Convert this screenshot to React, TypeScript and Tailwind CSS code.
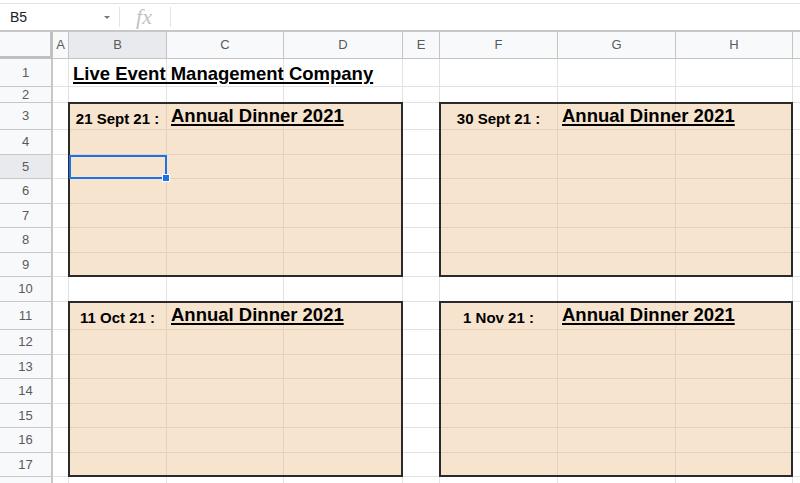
import React from "react";

const COLS = ["", "A", "B", "C", "D", "E", "F", "G", "H", ""];
const ROW_COUNT = 18;

const FONT = "font-['Liberation_Sans',Arial,sans-serif]";

function isOrange(r: number, c: number) {
  const inRows = (r >= 3 && r <= 9) || (r >= 11 && r <= 17);
  const inCols = (c >= 2 && c <= 4) || (c >= 6 && c <= 8);
  return inRows && inCols;
}

const dates: Record<string, string> = {
  "3-2": "21 Sept 21 :",
  "3-6": "30 Sept 21 :",
  "11-2": "11 Oct 21 :",
  "11-6": "1 Nov 21 :",
};

function HeaderCell({ c }: { c: number }) {
  if (c === 0) {
    return <div className="bg-[#f8f9fa] border-r-[3px] border-b-[3px] border-[#c0c0c0]" />;
  }
  const selected = c === 2;
  return (
    <div
      className={
        "flex items-center justify-center border-r border-b border-[#c4c4c4] text-[13px] text-[#5a5a5a] " +
        (selected ? "bg-[#e8eaed]" : "bg-[#f8f9fa]")
      }
    >
      {COLS[c]}
    </div>
  );
}

function RowHeader({ r }: { r: number }) {
  const selected = r === 5;
  return (
    <div
      className={
        "flex items-center justify-center border-r-2 border-b border-[#c8c8c8] text-[13px] text-[#5a5a5a] " +
        (selected ? "bg-[#e8eaed]" : "bg-[#f8f9fa]")
      }
    >
      {r <= 17 ? r : null}
    </div>
  );
}

function Cell({ r, c }: { r: number; c: number }) {
  const orange = isOrange(r, c);
  const base =
    "relative flex min-w-0 border-r border-b " +
    (orange ? "bg-[#f6e4cf] border-[#e3d2bf]" : "bg-white border-[#e2e2e2]");

  const key = `${r}-${c}`;
  let content: React.ReactNode = null;
  let align = "";

  if (r === 1 && c === 2) {
    align = " items-end";
    content = (
      <span className="relative z-10 whitespace-nowrap pl-[4px] pb-[3px] text-[18.5px] leading-none font-bold text-black underline decoration-2 underline-offset-[2px]">
        Live Event Management Company
      </span>
    );
  } else if (dates[key]) {
    align = " items-end justify-center";
    content = (
      <span
        className={
          "relative z-10 whitespace-nowrap text-[15px] leading-none font-bold text-black " +
          (r === 3 ? "pb-[3px]" : "pb-[4px]")
        }
      >
        {dates[key]}
      </span>
    );
  } else if ((r === 3 || r === 11) && (c === 3 || c === 7)) {
    align = " items-end";
    content = (
      <span
        className={
          "relative z-10 whitespace-nowrap pl-[4px] text-[18.5px] leading-none font-bold text-black underline decoration-2 underline-offset-[2px] " +
          (r === 3 ? "pb-[4px]" : "pb-[5px]")
        }
      >
        Annual Dinner 2021
      </span>
    );
  }

  return <div className={base + align}>{content}</div>;
}

export default function App() {
  const rows = Array.from({ length: ROW_COUNT }, (_, i) => i + 1);
  const cols = Array.from({ length: COLS.length }, (_, i) => i);

  return (
    <div className={"w-[800px] h-[483px] overflow-hidden bg-white " + FONT}>
      {/* Formula bar */}
      <div className="h-[32px] flex flex-col">
        <div className="h-[3px]" />
        <div className="h-px bg-[#e3e3e3]" />
        <div className="flex-1 flex items-center border-b-2 border-[#c8c8c8]">
          <div className="w-[119px] flex items-center pl-[10px] pr-[9px]">
            <span className="text-[14px] text-[#202124]">B5</span>
            <svg className="ml-auto" width="6" height="3" viewBox="0 0 6 3">
              <polygon points="0,0 6,0 3,3" fill="#767676" />
            </svg>
          </div>
          <div className="w-px h-[20px] bg-[#e3e3e3]" />
          <div className="w-[50px] flex justify-center">
            <span className="font-['Liberation_Serif',serif] italic text-[22px] leading-none text-[#c2c2c2] pr-[2px]">
              fx
            </span>
          </div>
          <div className="w-px h-[20px] bg-[#e3e3e3]" />
          <div className="flex-1" />
        </div>
      </div>

      {/* Grid */}
      <div className="relative grid grid-cols-[53px_16px_98px_117px_119px_37px_118px_118px_117px_100px] grid-rows-[27px_28px_16px_27px_repeat(7,24.5px)_28.5px_repeat(6,24.5px)_24px]">
        {cols.map((c) => (
          <HeaderCell key={`h-${c}`} c={c} />
        ))}
        {rows.map((r) =>
          cols.map((c) =>
            c === 0 ? <RowHeader key={`r-${r}`} r={r} /> : <Cell key={`${r}-${c}`} r={r} c={c} />
          )
        )}

        {/* Event boxes */}
        <div className="absolute -top-px -left-px right-0 bottom-0 col-start-3 col-end-6 row-start-4 row-end-11 z-20 border-2 border-[#2a2a2a] pointer-events-none" />
        <div className="absolute -top-px -left-px right-0 bottom-0 col-start-7 col-end-10 row-start-4 row-end-11 z-20 border-2 border-[#2a2a2a] pointer-events-none" />
        <div className="absolute -top-px -left-px right-0 bottom-0 col-start-3 col-end-6 row-start-12 row-end-19 z-20 border-2 border-[#2a2a2a] pointer-events-none" />
        <div className="absolute -top-px -left-px right-0 bottom-0 col-start-7 col-end-10 row-start-12 row-end-19 z-20 border-2 border-[#2a2a2a] pointer-events-none" />

        {/* Selection B5 */}
        <div className="absolute inset-0 col-start-3 col-end-4 row-start-6 row-end-7 z-30 border-2 border-[#1a73e8] pointer-events-none">
          <div className="absolute -right-[5px] -bottom-[5px] w-[8px] h-[8px] bg-[#1a73e8] border border-white" />
        </div>
      </div>
    </div>
  );
}
